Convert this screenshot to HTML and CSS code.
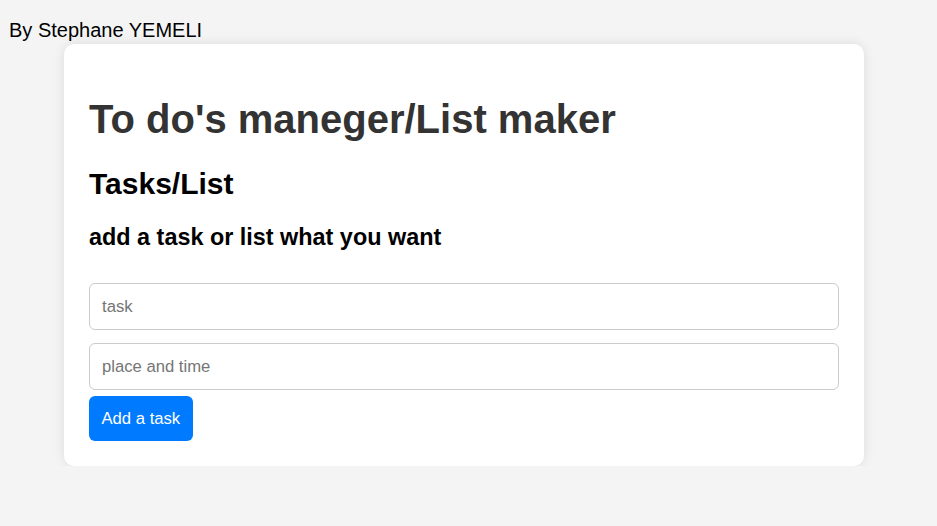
FILE: index.html
```html
<!DOCTYPE html>
<html lang="en">
<head>
<meta charset="utf-8">
<title>To do's maneger</title>
<link rel="stylesheet" href="styles.css">
</head>
<body>
<p class="author">By Stephane YEMELI</p>
<main class="card">
  <h1 class="title">To do's maneger/List maker</h1>
  <h2 class="subtitle">Tasks/List</h2>
  <h3 class="hint">add a task or list what you want</h3>
  <form class="task-form">
    <input class="field" type="text" placeholder="task">
    <input class="field" type="text" placeholder="place and time">
    <button class="add-btn" type="button">Add a task</button>
  </form>
</main>
</body>
</html>
```
FILE: styles.css
```css
html, body {
  margin: 0;
  padding: 0;
}
body {
  background: #f4f4f4;
  font-family: "Liberation Sans", Arial, sans-serif;
  color: #000;
  padding: 19px 0 0 9px;
}
.author {
  margin: 0;
  font-size: 20px;
  line-height: 23px;
}
.card {
  box-sizing: border-box;
  width: 800px;
  margin: 2px 0 0 55px;
  background: #fff;
  border-radius: 10px;
  padding: 25px;
  box-shadow: 0 0 12px rgba(0,0,0,0.1);
}
.title {
  font-size: 40px;
  color: #333;
  margin: 27px 0 0;
  line-height: 46px;
}
.subtitle {
  font-size: 30px;
  margin: 25px 0 0;
  line-height: 34px;
}
.hint {
  font-size: 23.4px;
  margin: 23px 0 0;
  line-height: 27px;
}
.task-form {
  display: flex;
  flex-direction: column;
  align-items: flex-start;
  margin-top: 32px;
}
.field {
  box-sizing: border-box;
  width: 750px;
  height: 47px;
  border: 1px solid #ccc;
  border-radius: 6px;
  padding: 0 12px;
  font-family: "Liberation Sans", Arial, sans-serif;
  font-size: 16.67px;
  margin-bottom: 13px;
}
.field::placeholder {
  color: #757575;
}
.field + .field {
  margin-bottom: 6px;
}
.add-btn {
  height: 45px;
  padding: 0 12.5px;
  background: #007bff;
  color: #fff;
  border: none;
  border-radius: 6px;
  font-family: "Liberation Sans", Arial, sans-serif;
  font-size: 16.67px;
}
```
